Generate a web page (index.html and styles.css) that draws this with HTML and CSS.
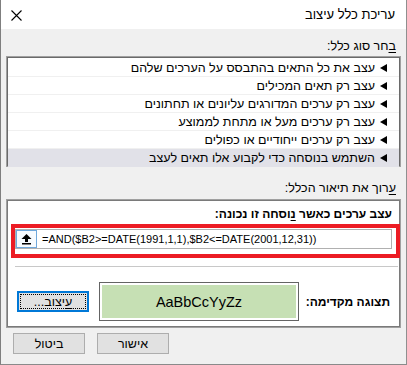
FILE: index.html
```html
<!DOCTYPE html>
<html lang="he" dir="rtl">
<head>
<meta charset="utf-8">
<link rel="stylesheet" href="styles.css">
</head>
<body>
<div class="dialog">
  <div class="titlebar">
    <span class="title">עריכת כלל עיצוב</span>
    <svg class="close" width="11" height="11" viewBox="0 0 11 11"><path d="M0.5 0.5 L10.5 10.5 M10.5 0.5 L0.5 10.5" stroke="#000" stroke-width="1.1" fill="none"/></svg>
  </div>
  <div class="content">
    <div class="label first"><u>ב</u>חר סוג כלל:</div>
    <div class="list">
      <div class="list-inner">
        <div class="row"><svg class="arrow" width="7" height="8" viewBox="0 0 7 8"><polygon points="0,4 7,0 7,8" fill="#000"/></svg><span>עצב את כל התאים בהתבסס על הערכים שלהם</span></div>
        <div class="row"><svg class="arrow" width="7" height="8" viewBox="0 0 7 8"><polygon points="0,4 7,0 7,8" fill="#000"/></svg><span>עצב רק תאים המכילים</span></div>
        <div class="row"><svg class="arrow" width="7" height="8" viewBox="0 0 7 8"><polygon points="0,4 7,0 7,8" fill="#000"/></svg><span>עצב רק ערכים המדורגים עליונים או תחתונים</span></div>
        <div class="row"><svg class="arrow" width="7" height="8" viewBox="0 0 7 8"><polygon points="0,4 7,0 7,8" fill="#000"/></svg><span>עצב רק ערכים מעל או מתחת לממוצע</span></div>
        <div class="row"><svg class="arrow" width="7" height="8" viewBox="0 0 7 8"><polygon points="0,4 7,0 7,8" fill="#000"/></svg><span>עצב רק ערכים ייחודיים או כפולים</span></div>
        <div class="row selected"><svg class="arrow" width="7" height="8" viewBox="0 0 7 8"><polygon points="0,4 7,0 7,8" fill="#000"/></svg><span>השתמש בנוסחה כדי לקבוע אלו תאים לעצב</span></div>
      </div>
    </div>
    <div class="label second"><u>ע</u>רוך את תיאור הכלל:</div>
    <div class="panel">
      <div class="bold-label">עצב ערכים כאשר <u>נ</u>וסחה זו נכונה:</div>
      <div class="redbox">
        <div class="formula-input">
          <span class="collapse-btn"><svg width="11" height="12" viewBox="0 0 11 12"><polygon points="0.5,6 5.5,1 10.5,6" fill="#000"/><rect x="4" y="5.5" width="3" height="3.5" fill="#000"/><rect x="1" y="10" width="9" height="1.5" fill="#000"/></svg></span>
          <span class="formula">=AND($B2&gt;=DATE(1991,1,1),$B2&lt;=DATE(2001,12,31))</span>
        </div>
      </div>
      <div class="sep"></div>
      <div class="preview-row">
        <div class="bold-label preview-label">תצוגה מקדימה:</div>
        <div class="preview-box"><div class="preview-fill">AaBbCcYyZz</div></div>
        <div class="btn format-btn"><span class="focus"><u>ע</u>יצוב...</span></div>
      </div>
    </div>
    <div class="buttons">
      <div class="btn">אישור</div>
      <div class="btn">ביטול</div>
    </div>
  </div>
</div>
</body>
</html>
```
FILE: styles.css
```css
html, body {
  margin: 0;
  padding: 0;
  background: #f0f0f0;
}
.dialog {
  width: 407px;
  height: 365px;
  box-sizing: border-box;
  border-left: 1px solid #7f7f7f;
  border-right: 1px solid #8f8f8f;
  border-bottom: 1px solid #8a8a8a;
  background: #f0f0f0;
  direction: rtl;
  font-family: "Liberation Sans", "DejaVu Sans", sans-serif;
  font-size: 12.5px;
  color: #000;
  overflow: hidden;
}
.titlebar {
  height: 29px;
  background: #fff;
  display: flex;
  align-items: center;
  justify-content: space-between;
  padding: 0 11px 0 10px;
}
.title {
  font-size: 13px;
  line-height: 16px;
}
.close {
  display: block;
  margin-top: 1px;
}
.content {
  padding: 0 5px;
}
.label {
  height: 16px;
  line-height: 16px;
  padding-right: 5px;
}
.label.first {
  margin-top: 9px;
}
.label.second {
  margin-top: 13px;
}
u {
  text-decoration: underline;
  text-underline-offset: 2px;
}
.list {
  margin-top: 2px;
  border: 1px solid #a0a0a0;
}
.list-inner {
  border: 1px solid #6a6a6a;
  background: #fff;
  height: 109px;
  box-sizing: border-box;
  padding-top: 1px;
}
.row {
  height: 18px;
  box-sizing: border-box;
  border-bottom: 1px solid #f0f0f0;
  display: flex;
  align-items: center;
  padding-right: 12px;
  gap: 5px;
  line-height: 16px;
}
.row.selected {
  background: #e1e1e8;
  border-bottom-color: #e1e1e8;
}
.arrow {
  display: block;
  flex: none;
}
.panel {
  margin-top: 3px;
  border: 1px solid #a0a0a0;
  box-shadow: inset 0 0 0 1px #7a7a7a;
  background: #fff;
  height: 129px;
  box-sizing: border-box;
  padding-top: 6px;
}
.bold-label {
  font-weight: bold;
  font-size: 12px;
  height: 16px;
  line-height: 16px;
  padding-right: 8px;
}
.redbox {
  margin: 2px 0 0 4px;
  border: 4px solid #ec1c24;
  height: 34px;
  box-sizing: border-box;
  padding: 1px 4px 0 0;
}
.formula-input {
  direction: ltr;
  height: 20px;
  box-sizing: border-box;
  border: 1px solid #b0b0b0;
  background: #fff;
  display: flex;
  align-items: center;
  padding-left: 0;
}
.collapse-btn {
  width: 21px;
  height: 18px;
  box-sizing: border-box;
  border: 1px solid #6fa8dc;
  background: #f7fbff;
  display: flex;
  align-items: center;
  justify-content: center;
  flex: none;
}
.collapse-btn svg {
  display: block;
}
.formula {
  margin-left: 5px;
  white-space: nowrap;
  font-size: 11px;
  line-height: 16px;
}
.sep {
  height: 1px;
  background: #c8c8c8;
  margin: 8px 2px 0 8px;
}
.preview-row {
  margin-top: 15px;
  height: 39px;
  display: flex;
  align-items: center;
  padding: 0 0 0 10px;
}
.preview-label {
  flex: 1;
  padding-right: 10px;
}
.preview-box {
  width: 200px;
  height: 39px;
  box-sizing: border-box;
  border: 1px solid #646464;
  padding: 2px;
  margin-left: 10px;
}
.preview-fill {
  height: 100%;
  background: #c6e0b4;
  display: flex;
  align-items: center;
  justify-content: center;
  font-size: 14.5px;
  direction: ltr;
}
.btn {
  width: 72px;
  height: 21px;
  box-sizing: border-box;
  border: 1px solid #adadad;
  background: #e1e1e1;
  display: flex;
  align-items: center;
  justify-content: center;
  line-height: 16px;
}
.format-btn {
  height: 21px;
  border: 1px solid #0078d7;
  box-shadow: inset 0 0 0 1px #0078d7;
  padding: 2px;
}
.focus {
  width: 100%;
  height: 100%;
  box-sizing: border-box;
  border: 1px dotted #000;
  display: flex;
  align-items: center;
  justify-content: center;
}
.buttons {
  margin-top: 5px;
  display: flex;
  justify-content: flex-end;
  gap: 12px;
  padding-left: 7px;
}
```
